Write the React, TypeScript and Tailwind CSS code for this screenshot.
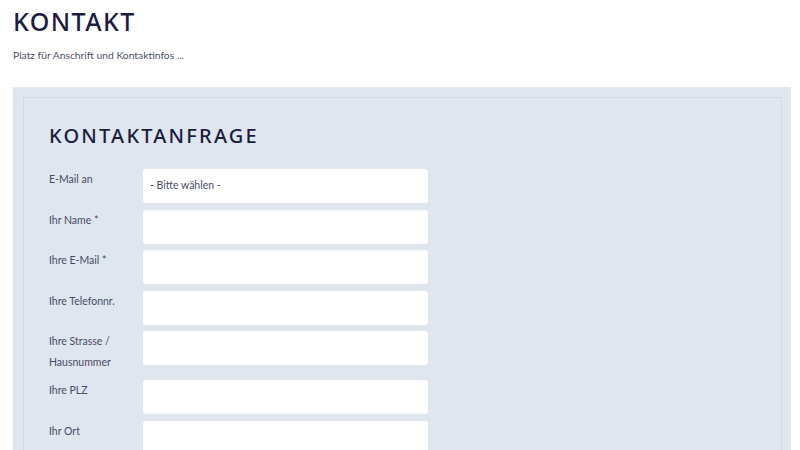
import React from "react";

const rows: { label: string[]; placeholder?: string }[] = [
  { label: ["E-Mail an"], placeholder: "- Bitte wählen -" },
  { label: ["Ihr Name *"] },
  { label: ["Ihre E-Mail *"] },
  { label: ["Ihre Telefonnr."] },
  { label: ["Ihre Strasse /", "Hausnummer"] },
  { label: ["Ihre PLZ"] },
  { label: ["Ihr Ort"] },
];

export default function App() {
  return (
    <div
      className="w-[800px] h-[450px] overflow-hidden bg-white"
      style={{ fontFamily: "Lato, 'Noto Sans', sans-serif" }}
    >
      <h1
        className="ml-[13px] pt-[7px] text-[25px] leading-[28px] font-medium tracking-[1.4px] text-[#1d1b3f]"
        style={{ fontFamily: "'Noto Sans', 'DejaVu Sans', sans-serif" }}
      >
        KONTAKT
      </h1>
      <p className="ml-[13px] mt-[12px] text-[10.3px] leading-[16px] text-[#4a4f69]">
        Platz für Anschrift und Kontaktinfos ...
      </p>
      <div className="ml-[13px] mt-[24px] w-[778px] h-[400px] bg-[#dfe6ed] pt-[10px] pl-[10px] pr-[9px]">
        <div className="h-full border border-[#d2dae3] pl-[25px] pt-[26px]">
          <h2
            className="text-[20px] leading-[24px] font-medium tracking-[2.2px] text-[#1d1b3f]"
            style={{ fontFamily: "'Noto Sans', 'DejaVu Sans', sans-serif" }}
          >
            KONTAKTANFRAGE
          </h2>
          <div className="mt-[21px] flex flex-col gap-[6.6px]">
            {rows.map((r, i) => (
              <div key={i} className="flex items-start">
                <div className="w-[94px] text-[10.5px] leading-[21px] text-[#474b66]">
                  {r.label.map((l, j) => (
                    <div key={j}>{l}</div>
                  ))}
                </div>
                <div className="w-[285px] h-[34px] rounded-[3px] bg-white flex items-center pl-[7px] text-[10.5px] text-[#474b66]">
                  {r.placeholder ?? ""}
                </div>
              </div>
            ))}
          </div>
        </div>
      </div>
    </div>
  );
}
